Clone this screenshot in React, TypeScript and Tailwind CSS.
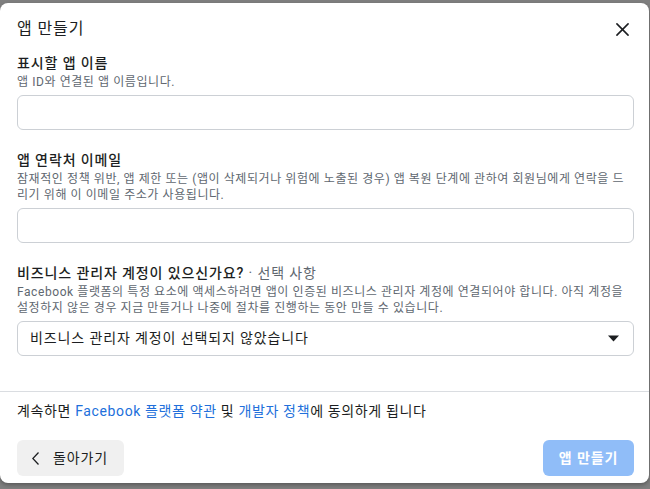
import React from "react";

const FONT = {
  fontFamily: "Roboto, 'Noto Sans CJK KR', 'Noto Sans', sans-serif",
  letterSpacing: "0.055em",
};

function Field({
  label,
  optional,
  help,
  children,
}: {
  label: string;
  optional?: string;
  help: string;
  children: React.ReactNode;
}) {
  return (
    <div className="flex flex-col">
      <div className="text-[14px] leading-[20px] font-medium text-[#1c1e21]">
        {label}
        {optional && <span className="font-normal text-[#606770]">{optional}</span>}
      </div>
      <p className="mt-[1px] text-[12px] leading-[16px] text-[#606770] tracking-[0.048em]">{help}</p>
      <div className="mt-[5px]">{children}</div>
    </div>
  );
}

export default function App() {
  return (
    <div className="w-[650px] h-[489px] bg-[#7f7f7f] pt-[3px] overflow-hidden" style={FONT}>
      <div className="w-[649px] h-[480px] bg-white rounded-lg shadow-[0_2px_4px_rgba(0,0,0,0.3)] flex flex-col">
        <div className="flex items-center justify-between pl-[17px] pr-[15px] pt-[14px]">
          <h1 className="text-[16px] leading-[24px] text-[#1c1e21]">앱 만들기</h1>
          <button className="w-[24px] h-[24px] flex items-center justify-center text-[#1c1e21]">
            <svg width="13" height="13" viewBox="0 0 14 14">
              <path d="M1 1L13 13M13 1L1 13" stroke="currentColor" strokeWidth="1.7" strokeLinecap="round" />
            </svg>
          </button>
        </div>

        <div className="flex flex-col gap-[20px] pl-[17px] pr-[15px] mt-[12px]">
          <Field label="표시할 앱 이름" help="앱 ID와 연결된 앱 이름입니다.">
            <input className="w-full h-[35px] border border-[#ccd0d5] rounded-md px-3 outline-none" />
          </Field>
          <Field
            label="앱 연락처 이메일"
            help="잠재적인 정책 위반, 앱 제한 또는 (앱이 삭제되거나 위험에 노출된 경우) 앱 복원 단계에 관하여 회원님에게 연락을 드리기 위해 이 이메일 주소가 사용됩니다."
          >
            <input className="w-full h-[35px] border border-[#ccd0d5] rounded-md px-3 outline-none" />
          </Field>
          <Field
            label="비즈니스 관리자 계정이 있으신가요?"
            optional=" · 선택 사항"
            help="Facebook 플랫폼의 특정 요소에 액세스하려면 앱이 인증된 비즈니스 관리자 계정에 연결되어야 합니다. 아직 계정을 설정하지 않은 경우 지금 만들거나 나중에 절차를 진행하는 동안 만들 수 있습니다."
          >
            <div className="w-full h-[35px] border border-[#ccd0d5] rounded-md flex items-center justify-between pl-[12px] pr-[14px]">
              <span className="text-[14px] text-[#1c1e21]">비즈니스 관리자 계정이 선택되지 않았습니다</span>
              <svg width="11" height="7" viewBox="0 0 11 7">
                <path d="M0 0.5H11L5.5 6.5Z" fill="#1c1e21" />
              </svg>
            </div>
          </Field>
        </div>

        <div className="mt-[35px] border-t border-[#dadde1]" />

        <p className="pl-[17px] pt-[9px] text-[14px] leading-[20px] text-[#1c1e21] tracking-[0.045em]">
          계속하면 <a className="text-[#216fdb]">Facebook 플랫폼 약관</a> 및{" "}
          <a className="text-[#216fdb]">개발자 정책</a>에 동의하게 됩니다
        </p>

        <div className="flex items-center justify-between pl-[17px] pr-[15px] mt-[19px]">
          <button className="h-[36px] w-[107px] pl-[15px] rounded-md bg-[#f0f0f0] flex items-center gap-[14px] text-[14px] text-[#1c1e21]">
            <svg width="7" height="13" viewBox="0 0 7 13">
              <path d="M6.5 0.5L0.8 6.5L6.5 12.5" stroke="#1c1e21" strokeWidth="1.3" fill="none" />
            </svg>
            돌아가기
          </button>
          <button className="h-[36px] w-[91px] rounded-md bg-[#90bdf8] text-[14px] font-bold text-white">
            앱 만들기
          </button>
        </div>
      </div>
    </div>
  );
}
